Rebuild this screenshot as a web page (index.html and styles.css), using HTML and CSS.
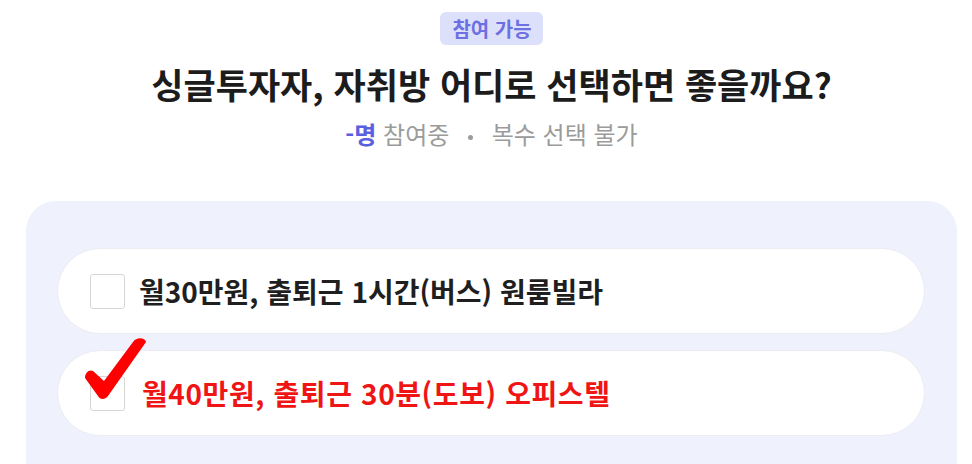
FILE: index.html
```html
<!DOCTYPE html>
<html lang="ko">
<head>
  <meta charset="UTF-8">
  <meta name="viewport" content="width=device-width, initial-scale=1.0">
  <title>투표</title>
  <link rel="stylesheet" href="styles.css">
</head>
<body>
  <div class="poll">
    <div class="poll-head">
      <span class="badge">참여 가능</span>
      <h1>싱글투자자, 자취방 어디로 선택하면 좋을까요?</h1>
      <p class="meta"><b>-명</b> 참여중 <span class="dot"></span> 복수 선택 불가</p>
    </div>

    <div class="options">
      <label class="option">
        <span class="box"></span>
        <span class="text">월30만원, 출퇴근 1시간(버스) 원룸빌라</span>
      </label>
      <label class="option picked">
        <span class="box"></span>
        <span class="text">월40만원, 출퇴근 30분(도보) 오피스텔</span>
        <svg class="check" viewBox="0 0 62 62" width="62" height="62">
          <path d="M0 40 C0 35 4 31 8 33 L19 43 L48 4 C51 -1 60 -1 61 4 L23 58 C20 62 15 62 13 58 Z" fill="#ff0000"/>
        </svg>
      </label>
    </div>
  </div>
</body>
</html>
```

FILE: styles.css
```css
body {
  margin: 0;
  background: #fff;
  font-family: "Noto Sans CJK KR", "Noto Sans", sans-serif;
  color: #1f1f1f;
}
.poll {
  padding: 12px 15px 0 26px;
}
.poll-head {
  display: flex;
  flex-direction: column;
  align-items: center;
}
.badge {
  display: inline-block;
  height: 33px;
  line-height: 33px;
  padding: 0 11px 0 12px;
  border-radius: 6px;
  background: #dde0fb;
  color: #6d70e2;
  font-size: 20px;
  font-weight: 700;
}
h1 {
  margin: 17px 0 0;
  font-size: 35px;
  line-height: 44px;
  font-weight: 700;
  color: #1c1c1c;
}
.meta {
  margin: 13px 0 0;
  font-size: 24px;
  line-height: 30px;
  color: #9b9b9b;
}
.meta b {
  color: #5a5ee0;
}
.dot {
  display: inline-block;
  width: 5px;
  height: 5px;
  margin: 0 12px;
  border-radius: 50%;
  background: #9b9b9b;
  vertical-align: middle;
}
.options {
  margin-top: 52px;
  background: #eff1fc;
  border-radius: 30px;
  padding: 47px 32px 60px 31px;
  display: flex;
  flex-direction: column;
  gap: 16px;
}
.option {
  position: relative;
  display: flex;
  align-items: center;
  gap: 14px;
  height: 86px;
  padding: 0 32px;
  background: #fff;
  border: 1px solid #ececf3;
  border-radius: 43px;
  box-sizing: border-box;
}
.box {
  width: 35px;
  height: 35px;
  border: 1px solid #d6d6d6;
  border-radius: 3px;
  box-sizing: border-box;
  flex: none;
}
.text {
  font-size: 28px;
  font-weight: 700;
}
.picked .text {
  margin-left: 3px;
  letter-spacing: 0.6px;
  color: #f01515;
}
.check {
  position: absolute;
  left: 27px;
  top: -13px;
}
```
